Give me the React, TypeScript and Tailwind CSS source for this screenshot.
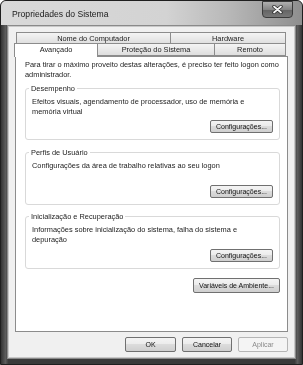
import { ReactNode } from "react"

function Button({ children, width, disabled }: { children: ReactNode; width: string; disabled?: boolean }) {
  return (
    <div
      className={`${width} flex items-center justify-center rounded-[2px] border text-[7px] leading-none ${
        disabled
          ? "border-[#b5b5b5] bg-[#f4f4f4] text-[#8a8a8a]"
          : "border-[#707070] bg-[linear-gradient(#f4f4f4_0%,#ebebeb_50%,#dcdcdc_50%,#cfcfcf_100%)] text-[#111]"
      }`}
    >
      {children}
    </div>
  )
}

function GroupBox({ title, height, children }: { title: string; height: string; children: ReactNode }) {
  return (
    <div className={`relative ${height} rounded-[3px] border border-[#d9d9d9] flex flex-col justify-between pl-[6px] pr-[6px] pt-[8px] pb-[6px]`}>
      <span className="absolute -top-[5px] left-[3px] bg-white px-[2px] leading-[9px] text-[#222]">{title}</span>
      <div className="w-[230px] leading-[9.5px] text-[#222]">{children}</div>
      <div className="flex justify-end">
        <Button width="w-[63px] h-[13px]">Configurações...</Button>
      </div>
    </div>
  )
}

export default function App() {
  return (
    <div className="w-[303px] h-[365px] bg-white grayscale font-['Liberation_Sans',Arial,sans-serif] text-[7.4px] antialiased">
      <div className="w-[303px] h-[365px] flex flex-col rounded-t-[6px] border border-[#1f1f1f] bg-[#3d3d3d] overflow-hidden">
        {/* title bar */}
        <div className="relative h-[24px] shrink-0 bg-[linear-gradient(90deg,#d9d9d9_0%,#d3d3d3_55%,#b9b9b9_75%,#8e8e8e_100%)]">
          <span className="absolute left-[11px] top-[9px] text-[8.6px] leading-none text-[#1a1a1a]">Propriedades do Sistema</span>
          <div className="absolute right-[9px] top-[0px] w-[31px] h-[17px] rounded-b-[4px] border border-[#3a3a3a] bg-[linear-gradient(#b0b0b0_0%,#858585_50%,#636363_52%,#777777_100%)] flex items-center justify-center">
            <svg width="11" height="9" viewBox="0 0 11 9">
              <path d="M2 1.5 L9 7.5 M9 1.5 L2 7.5" stroke="#2a2a2a" strokeWidth="3.4" strokeLinecap="round" />
              <path d="M2 1.5 L9 7.5 M9 1.5 L2 7.5" stroke="#f4f4f4" strokeWidth="1.8" strokeLinecap="round" />
            </svg>
          </div>
        </div>

        {/* frame sides */}
        <div className="flex-1 flex flex-col px-[6px] pb-[5px] bg-[linear-gradient(90deg,#343434_0%,#5c5c5c_1.5%,#3a3a3a_2.5%,#3a3a3a_97.5%,#5c5c5c_98.5%,#343434_100%)]">
          <div className="flex-1 flex flex-col border border-[#8a8a8a]">
            <div className="flex-1 flex flex-col border border-[#c8c8c8] bg-[#f0f0f0] pl-[5px] pr-[6px] pt-[5px]">
              {/* tabs */}
              <div className="flex ml-[2px] h-[11px] text-[#222]">
                <div className="w-[155px] h-[12px] border border-b-0 border-[#8c8c8c] bg-[linear-gradient(#f4f4f4,#dedede)] flex items-center justify-center leading-none">Nome do Computador</div>
                <div className="w-[115px] h-[12px] border border-l-0 border-b-0 border-[#8c8c8c] bg-[linear-gradient(#f4f4f4,#dedede)] flex items-center justify-center leading-none">Hardware</div>
              </div>
              <div className="flex h-[13px] items-end text-[#222] relative z-10">
                <div className="w-[84px] h-[14px] -mb-[1px] border border-b-0 border-[#8c8c8c] bg-white flex items-start pt-[2px] justify-center leading-none">Avançado</div>
                <div className="w-[117px] h-[13px] border border-l-0 border-[#8c8c8c] bg-[linear-gradient(#f4f4f4,#dedede)] flex items-center justify-center leading-none">Proteção do Sistema</div>
                <div className="w-[71px] h-[13px] border border-l-0 border-[#8c8c8c] bg-[linear-gradient(#f4f4f4,#dedede)] flex items-center justify-center leading-none">Remoto</div>
              </div>

              {/* panel */}
              <div className="h-[276px] ml-[1px] border border-[#8c8c8c] bg-white pl-[9px] pr-[7px] pt-[3px] flex flex-col">
                <p className="leading-[10px] text-[#222]">
                  Para tirar o máximo proveito destas alterações, é preciso ter feito logon como administrador.
                </p>
                <div className="mt-[8px]">
                  <GroupBox title="Desempenho" height="h-[52px]">
                    Efeitos visuais, agendamento de processador, uso de memória e memória virtual
                  </GroupBox>
                </div>
                <div className="mt-[12px]">
                  <GroupBox title="Perfis de Usuário" height="h-[53px]">
                    Configurações da área de trabalho relativas ao seu logon
                  </GroupBox>
                </div>
                <div className="mt-[11px]">
                  <GroupBox title="Inicialização e Recuperação" height="h-[53px]">
                    Informações sobre inicialização do sistema, falha do sistema e depuração
                  </GroupBox>
                </div>
                <div className="mt-[9px] flex justify-end">
                  <Button width="w-[87px] h-[15px]">Variáveis de Ambiente...</Button>
                </div>
              </div>

              {/* dialog buttons */}
              <div className="mt-[5px] flex justify-end gap-[6px]">
                <Button width="w-[51px] h-[15px]">OK</Button>
                <Button width="w-[50px] h-[15px]">Cancelar</Button>
                <Button width="w-[50px] h-[15px]" disabled>
                  Aplicar
                </Button>
              </div>
            </div>
          </div>
        </div>
      </div>
    </div>
  )
}
